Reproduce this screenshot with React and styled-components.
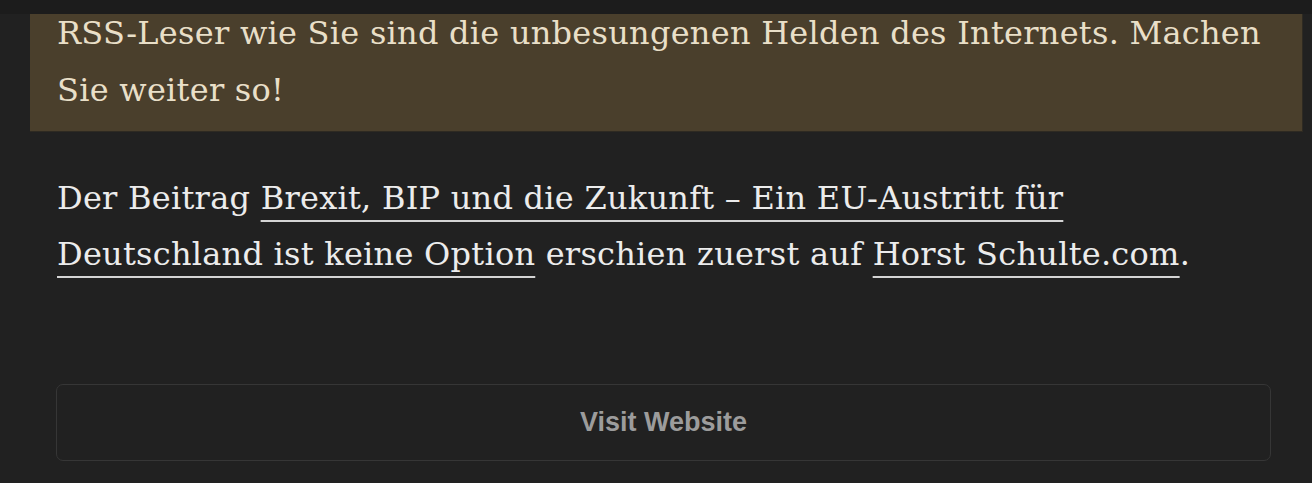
import React from 'react';
import styled, { createGlobalStyle } from 'styled-components';

const GlobalStyle = createGlobalStyle`
  html, body {
    margin: 0;
    padding: 0;
    background: #1b1b1b;
  }
`;

const Page = styled.div`
  width: 1312px;
  height: 483px;
  overflow: hidden;
  background: #212121;
  border-top: 14px solid #1c1c1c;
  box-sizing: border-box;
  font-family: "DejaVu Serif", serif;
  font-size: 32px;
  letter-spacing: 0.25px;
`;

const Notice = styled.div`
  display: flow-root;
  margin: 0 9px 0 30px;
  background: #4a3f2c;
  color: #e9dfc8;
  line-height: 57px;
  padding: 0 24px 12px 27px;
  border-right: 1px solid #2e2a22;
  border-bottom: 1px solid #2e2a22;
`;

const NoticeText = styled.p`
  margin: -9px 0 0;
`;

const Body = styled.p`
  width: 1210px;
  margin: 38px 0 0 57px;
  color: #ececec;
  line-height: 56px;
`;

const Link = styled.a`
  color: inherit;
  text-decoration: underline;
  text-decoration-thickness: 2px;
  text-underline-offset: 11px;
  text-decoration-color: #d4d4d4;
`;

const VisitButton = styled.button`
  display: flex;
  align-items: center;
  justify-content: center;
  width: 1215px;
  height: 77px;
  margin: 102px 0 0 56px;
  padding: 0;
  background: #212121;
  border: 1.5px solid #363636;
  border-radius: 7px;
  color: #9c9c9c;
  font-family: "Liberation Sans", Arial, sans-serif;
  font-weight: 700;
  font-size: 27px;
  letter-spacing: 0;
`;

export default function App() {
  return (
    <Page>
      <GlobalStyle />
      <Notice>
        <NoticeText>
          RSS-Leser wie Sie sind die unbesungenen Helden des Internets. Machen Sie weiter so!
        </NoticeText>
      </Notice>
      <Body>
        Der Beitrag <Link href="#">Brexit, BIP und die Zukunft – Ein EU-Austritt für Deutschland ist keine Option</Link> erschien zuerst auf <Link href="#">Horst Schulte.com</Link>.
      </Body>
      <VisitButton>Visit Website</VisitButton>
    </Page>
  );
}
